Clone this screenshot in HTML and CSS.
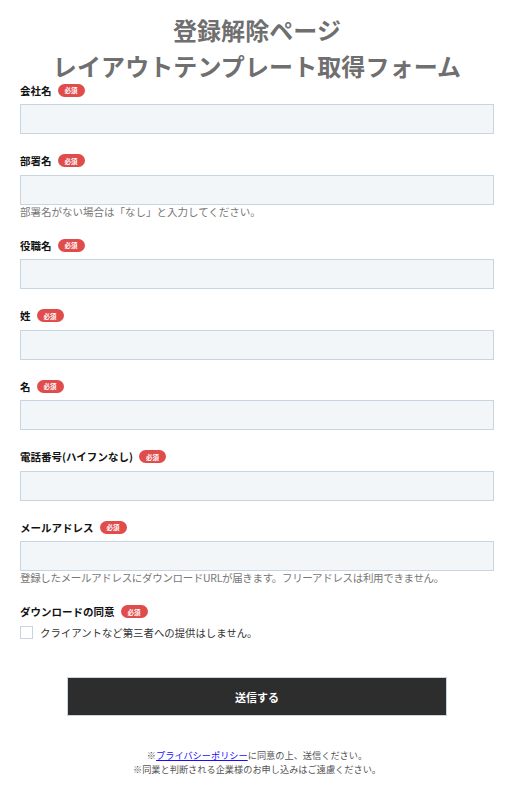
FILE: index.html
```html
<!DOCTYPE html>
<html lang="ja">
<head>
<meta charset="utf-8">
<link rel="stylesheet" href="styles.css">
</head>
<body>
<div class="page">
  <h1 class="title">登録解除ページ<br>レイアウトテンプレート取得フォーム</h1>
  <form class="form">
    <div class="field">
      <div class="label">会社名<span class="badge">必須</span></div>
      <input class="input" type="text">
    </div>
    <div class="field">
      <div class="label">部署名<span class="badge">必須</span></div>
      <input class="input" type="text">
      <p class="help">部署名がない場合は「なし」と入力してください。</p>
    </div>
    <div class="field">
      <div class="label">役職名<span class="badge">必須</span></div>
      <input class="input" type="text">
    </div>
    <div class="field">
      <div class="label">姓<span class="badge">必須</span></div>
      <input class="input" type="text">
    </div>
    <div class="field">
      <div class="label">名<span class="badge">必須</span></div>
      <input class="input" type="text">
    </div>
    <div class="field">
      <div class="label">電話番号(ハイフンなし)<span class="badge">必須</span></div>
      <input class="input" type="text">
    </div>
    <div class="field">
      <div class="label">メールアドレス<span class="badge">必須</span></div>
      <input class="input" type="text">
      <p class="help help-tight">登録したメールアドレスにダウンロードURLが届きます。フリーアドレスは利用できません。</p>
    </div>
    <div class="field">
      <div class="label">ダウンロードの同意<span class="badge">必須</span></div>
      <label class="check"><span class="box"></span>クライアントなど第三者への提供はしません。</label>
    </div>
    <div class="actions">
      <button class="submit" type="button">送信する</button>
    </div>
  </form>
  <div class="notes">
    <p>※<a href="#" class="link">プライバシーポリシー</a>に同意の上、送信ください。</p>
    <p>※同業と判断される企業様のお申し込みはご遠慮ください。</p>
  </div>
</div>
</body>
</html>
```
FILE: styles.css
```css
* { box-sizing: border-box; }
html, body { margin: 0; padding: 0; background: #fff; }
body {
  font-family: "Noto Sans CJK JP", "Noto Sans", sans-serif;
  color: #222;
}
.page { padding: 0 25px 0 20px; }
.title {
  margin: 0 0 -2px;
  padding-top: 12px;
  font-size: 24px;
  line-height: 36px;
  font-weight: 700;
  color: #6f6f6f;
  text-align: center;
  letter-spacing: 0.1px;
}
.form { margin: 0; }
.field { margin-bottom: 18.5px; }
.label {
  display: flex;
  align-items: center;
  height: 16px;
  margin-bottom: 6px;
  font-size: 10.5px;
  font-weight: 700;
  color: #111;
}
.badge {
  display: inline-flex;
  align-items: center;
  justify-content: center;
  width: 27px;
  height: 13px;
  margin-left: 6px;
  border-radius: 7px;
  background: #e04c4c;
  color: #fff;
  font-size: 6.5px;
  font-weight: 700;
}
.input {
  display: block;
  width: 100%;
  height: 30px;
  margin: 0;
  padding: 0 8px;
  border: 1px solid #c7d5e3;
  background: #f3f6f9;
  border-radius: 0;
  font: inherit;
  outline: none;
}
.help {
  margin: 0;
  height: 14px;
  line-height: 14px;
  font-size: 10.5px;
  color: #777;
  white-space: nowrap;
}
.help-tight { letter-spacing: -0.33px; }
.check {
  display: flex;
  align-items: center;
  height: 14px;
  font-size: 10.4px;
  color: #333;
}
.box {
  width: 13px;
  height: 13px;
  margin-right: 7px;
  border: 1px solid #c7d5e3;
  background: #fff;
}
.actions {
  display: flex;
  justify-content: center;
  padding-top: 19px;
}
.submit {
  width: 80%;
  height: 39px;
  border: 1px solid #c7d5e3;
  background: #2d2d2d;
  color: #fff;
  font-family: inherit;
  font-size: 11px;
  font-weight: 700;
  border-radius: 0;
}
.notes {
  margin-top: 32px;
  text-align: center;
  font-size: 9.2px;
  line-height: 14px;
  color: #555;
}
.notes p { margin: 0; }
.link { color: #1a0dff; text-decoration: underline; }
```
